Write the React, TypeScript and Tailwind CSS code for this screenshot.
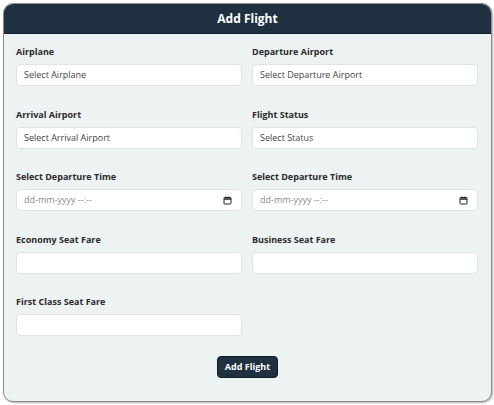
import React from "react";

const font = { fontFamily: '"Open Sans", "Noto Sans", sans-serif' };

function Label({ children }: { children: React.ReactNode }) {
  return <div className="text-[9px] font-bold text-[#2b2b2b] leading-[12px] mb-[6px]">{children}</div>;
}

function Box({ children }: { children?: React.ReactNode }) {
  return (
    <div className="h-[22px] bg-white border border-[#dfe3e6] rounded-[4px] flex items-center px-[7px] text-[9px] text-[#444]">
      {children}
    </div>
  );
}

function Calendar() {
  return (
    <svg width="9" height="9" viewBox="0 0 9 9" className="ml-auto mr-[2px]">
      <rect x="1" y="1.5" width="7" height="6.5" rx="0.8" fill="none" stroke="#222" strokeWidth="1" />
      <line x1="1" y1="3" x2="8" y2="3" stroke="#222" strokeWidth="1.4" />
      <line x1="3" y1="0.5" x2="3" y2="2" stroke="#222" strokeWidth="1" />
      <line x1="6" y1="0.5" x2="6" y2="2" stroke="#222" strokeWidth="1" />
    </svg>
  );
}

function DateBox() {
  return (
    <Box>
      <span className="text-[#8a8a8a]">dd-mm-yyyy --:--</span>
      <Calendar />
    </Box>
  );
}

function Field({ label, children }: { label: string; children: React.ReactNode }) {
  return (
    <div>
      <Label>{label}</Label>
      {children}
    </div>
  );
}

export default function App() {
  return (
    <div className="w-[494px] h-[405px] bg-white pt-[3px] pl-[3px]" style={font}>
      <div className="w-[489px] h-[399px] border border-[#8c8c8c] rounded-[10px] overflow-hidden bg-[#edf2f3] flex flex-col shadow-[1px_1px_2px_rgba(0,0,0,0.3)]">
        <div className="h-[30px] bg-[#1f3140] border-b border-[#15232e] flex items-center justify-center text-white text-[12px] font-bold">
          Add Flight
        </div>
        <div className="pl-[12px] pr-[13px] pt-[12px] grid grid-cols-2 gap-x-[10px] gap-y-[22.5px]">
          <Field label="Airplane"><Box>Select Airplane</Box></Field>
          <Field label="Departure Airport"><Box>Select Departure Airport</Box></Field>
          <Field label="Arrival Airport"><Box>Select Arrival Airport</Box></Field>
          <Field label="Flight Status"><Box>Select Status</Box></Field>
          <Field label="Select Departure Time"><DateBox /></Field>
          <Field label="Select Departure Time"><DateBox /></Field>
          <Field label="Economy Seat Fare"><Box /></Field>
          <Field label="Business Seat Fare"><Box /></Field>
          <Field label="First Class Seat Fare"><Box /></Field>
        </div>
        <div className="flex justify-center mt-[20px]">
          <button className="h-[22px] px-[7px] bg-[#1f3140] text-white text-[9px] font-bold rounded-[4px] border border-[#0f1a22]">
            Add Flight
          </button>
        </div>
      </div>
    </div>
  );
}
